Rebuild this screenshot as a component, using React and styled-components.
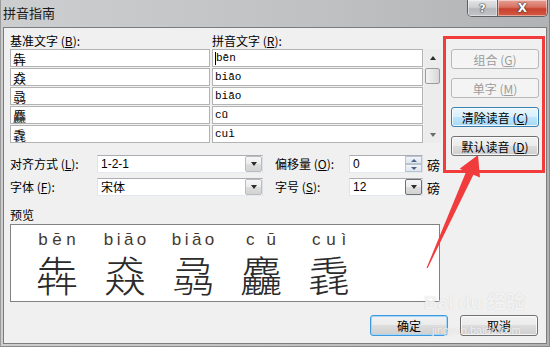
import React from 'react';
import styled, { createGlobalStyle, css } from 'styled-components';

const Global = createGlobalStyle`
  html, body { margin: 0; padding: 0; background: #fff; }
  body {
    font-family: "Noto Sans CJK SC", "Liberation Sans", sans-serif;
    font-size: 12px;
    color: #000;
  }
`;

const CJK = '"Noto Sans CJK SC", "Liberation Sans", sans-serif';

const Win = styled.div`
  position: relative;
  width: 550px;
  height: 347px;
  box-sizing: border-box;
  display: flex;
  flex-direction: column;
  overflow: hidden;
  background: linear-gradient(to right, #cdcecf 0%, #bfc0c2 60%, #b1b2b4 100%);
  box-shadow: inset 1px 0 0 #9a9a9a, inset -1px 0 0 #8a8a8a, inset 0 -1px 0 #8a8a8a;
`;

const TitleBar = styled.div`
  height: 27px;
  flex: none;
  display: flex;
  align-items: flex-start;
  justify-content: space-between;
`;

const Title = styled.div`
  padding: 4px 0 0 3px;
  font-size: 13px;
  line-height: 17px;
  color: #1c1c1c;
`;

const CaptionGroup = styled.div`
  display: flex;
  margin-right: 2px;
  border: 1px solid #5f6063;
  border-top: none;
  border-radius: 0 0 5px 5px;
  overflow: hidden;
  height: 16px;
`;

const CapBtn = styled.div`
  width: ${p => p.$w}px;
  height: 100%;
  display: flex;
  align-items: center;
  justify-content: center;
  font-family: "DejaVu Sans", sans-serif;
  font-weight: bold;
  font-size: ${p => (p.$close ? 12 : 11)}px;
  color: #fff;
  text-shadow: 0 0 1px #333, 0 0 1px #333, 0 0 2px #444;
  box-shadow: inset 0 0 0 1px rgba(255, 255, 255, 0.45);
  ${p =>
    p.$close
      ? css`
          background: linear-gradient(#e5a195 0%, #d8705f 45%, #c7402f 55%, #d45a42 100%);
        `
      : css`
          border-right: 1px solid #5f6063;
          background: linear-gradient(#e4e5e7 0%, #cfd0d2 45%, #b7b8bb 55%, #c3c4c6 100%);
        `}
`;

const Client = styled.div`
  flex: 1;
  margin: 0 3px 3px 3px;
  border: 1px solid #7c7c7c;
  background: #f0f0f0;
  display: flex;
  flex-direction: column;
  padding: 6px 0 0 6px;
`;

const Top = styled.div`
  display: flex;
  align-items: flex-start;
`;

const LeftPanel = styled.div`
  width: 431px;
  display: flex;
  flex-direction: column;
`;

const HeaderRow = styled.div`
  height: 15px;
  display: flex;
`;

const Label = styled.span`
  display: inline-block;
  width: ${p => (p.$w ? `${p.$w}px` : 'auto')};
  margin-left: ${p => p.$ml || 0}px;
  font-size: 12px;
  line-height: 14px;
  white-space: nowrap;
  color: #000;
`;

const U = styled.span`
  text-decoration: underline;
  text-underline-offset: 1px;
`;

const GridArea = styled.div`
  display: flex;
`;

const Grid = styled.div`
  display: grid;
  grid-template-columns: 200px 211px;
  column-gap: 2px;
  row-gap: 1px;
`;

const Cell = styled.div`
  box-sizing: border-box;
  height: 18px;
  border: 1px solid #b3b3b3;
  background: #fff;
  display: flex;
  align-items: center;
  padding-left: 2px;
  white-space: nowrap;
  ${p =>
    p.$py
      ? css`
          font-family: "Liberation Mono", monospace;
          font-size: 11px;
        `
      : css`
          font-family: ${CJK};
          font-size: 13px;
        `}
`;

const Caret = styled.span`
  display: inline-block;
  width: 1px;
  height: 13px;
  background: #000;
`;

const ScrollBar = styled.div`
  box-sizing: border-box;
  width: 17px;
  height: 94px;
  margin-left: 1px;
  background: #ececec;
  display: flex;
  flex-direction: column;
  align-items: center;
`;

const ScrollBtn = styled.div`
  width: 17px;
  height: 17px;
  display: flex;
  align-items: center;
  justify-content: center;
  flex: none;
`;

const Arrow = styled.span`
  width: 0;
  height: 0;
  border-left: ${p => p.$s || 3.5}px solid transparent;
  border-right: ${p => p.$s || 3.5}px solid transparent;
  ${p =>
    p.$up
      ? css`border-bottom: ${p.$h || 4}px solid ${p.$c || '#2b2b2b'};`
      : css`border-top: ${p.$h || 4}px solid ${p.$c || '#2b2b2b'};`}
`;

const Thumb = styled.div`
  box-sizing: border-box;
  width: 15px;
  height: 16px;
  margin-top: 2px;
  border: 1px solid #9c9c9c;
  border-radius: 2px;
  background: linear-gradient(to right, #f3f3f3, #e6e6e6 50%, #d6d6d6);
  flex: none;
`;

const Spacer = styled.div`
  flex: 1;
`;

const OptRow = styled.div`
  display: flex;
  align-items: center;
  height: 18px;
  margin-top: ${p => p.$mt}px;
`;

const Field = styled.div`
  box-sizing: border-box;
  width: ${p => p.$w}px;
  height: 18px;
  background: #fff;
  border: 1px solid;
  border-color: #abadb3 #dbdfe6 #e3e9ef #e2e3ea;
  display: flex;
  align-items: stretch;
`;

const FieldText = styled.span`
  flex: 1;
  padding-left: 3px;
  font-size: 12px;
  line-height: 16px;
  font-family: ${p => (p.$latin ? '"Liberation Sans", sans-serif' : CJK)};
`;

const DropBtn = styled.div`
  box-sizing: border-box;
  width: 17px;
  border: 1px solid ${p => (p.$dark ? '#6f6f6f' : '#bcbcbc')};
  border-radius: 2px;
  background: linear-gradient(#f6f6f6 0%, #ececec 49%, #dedede 50%, #d2d2d2 100%);
  display: flex;
  align-items: center;
  justify-content: center;
`;

const SpinCol = styled.div`
  width: 17px;
  display: flex;
  flex-direction: column;
`;

const SpinBtn = styled.div`
  flex: 1;
  box-sizing: border-box;
  border: 1px solid #b8c3d0;
  background: linear-gradient(#f1f4f8, #dfe6ee);
  display: flex;
  align-items: center;
  justify-content: center;
`;

const Unit = styled.span`
  margin-left: 4px;
  font-size: 13px;
`;

const PreviewLabel = styled.div`
  margin-top: 12px;
  height: 16px;
  font-size: 12px;
  line-height: 14px;
`;

const PreviewBox = styled.div`
  box-sizing: border-box;
  width: 430px;
  height: 78px;
  background: #fff;
  border: 1px solid #828282;
  display: flex;
  gap: 24px;
  padding: 5px 0 0 24px;
`;

const Ruby = styled.div`
  width: 44px;
  display: flex;
  flex-direction: column;
  align-items: center;
`;

const PinyinLine = styled.div`
  width: ${p => p.$w}px;
  height: 22px;
  display: flex;
  justify-content: space-around;
  font-family: "Liberation Sans", "DejaVu Sans", sans-serif;
  font-size: 17px;
  line-height: 20px;
  color: #45392f;
`;

const Han = styled.div`
  font-family: ${CJK};
  font-weight: 300;
  font-size: 42px;
  line-height: 44px;
  color: #2b2b2b;
`;

const ButtonCol = styled.div`
  margin-left: 10px;
  padding-top: 15px;
  display: flex;
  flex-direction: column;
  gap: 9px;
`;

const Btn = styled.div`
  box-sizing: border-box;
  width: ${p => p.$w}px;
  height: ${p => p.$h}px;
  border-radius: 3px;
  border: 1px solid #707070;
  background: linear-gradient(#f2f2f2 0%, #ebebeb 49%, #dddddd 50%, #cfcfcf 100%);
  box-shadow: inset 0 0 0 1px rgba(255, 255, 255, 0.75);
  display: flex;
  align-items: center;
  justify-content: center;
  font-size: 12px;
  white-space: nowrap;
  color: #000;
  ${p =>
    p.$disabled &&
    css`
      border-color: #b5b9bc;
      background: #f4f4f4;
      color: #9c9c9c;
      box-shadow: none;
    `}
  ${p =>
    p.$hot &&
    css`
      border-color: #3c7fb1;
      background: linear-gradient(#eaf6fd 0%, #d9f0fc 49%, #bee6fd 50%, #a7d9f5 100%);
    `}
  ${p =>
    p.$default &&
    css`
      border-color: #3d9ae0;
      box-shadow: inset 0 0 0 1px #a6d6f5;
    `}
`;

const BottomRow = styled.div`
  margin-top: 13px;
  padding-right: 8px;
  display: flex;
  justify-content: flex-end;
  gap: 12px;
`;

const Highlight = styled.div`
  position: absolute;
  left: 443px;
  top: 36px;
  width: 102px;
  height: 137px;
  box-sizing: border-box;
  border: 3px solid #f23b3b;
  pointer-events: none;
`;

const Overlay = styled.svg`
  position: absolute;
  left: 0;
  top: 0;
  pointer-events: none;
`;

const Watermark = styled.div`
  position: absolute;
  left: 424px;
  top: 291px;
  display: flex;
  flex-direction: column;
  align-items: flex-start;
  color: rgba(255, 255, 255, 0.75);
  text-shadow: 0 0 1px rgba(150, 150, 150, 0.45);
  pointer-events: none;
`;

const WmBig = styled.span`
  font-family: "Liberation Sans", ${CJK};
  font-size: 19px;
  font-weight: bold;
  line-height: 24px;
`;

const WmSmall = styled.span`
  font-family: "Liberation Sans", sans-serif;
  font-size: 11px;
  line-height: 14px;
  margin-left: 8px;
  margin-top: 8px;
`;

const rows = [
  ['犇', 'bēn'],
  ['猋', 'biāo'],
  ['骉', 'biāo'],
  ['麤', 'cū'],
  ['毳', 'cuì'],
];

const previews = [
  { han: '犇', py: ['b', 'ē', 'n'], w: 42 },
  { han: '猋', py: ['b', 'i', 'ā', 'o'], w: 46 },
  { han: '骉', py: ['b', 'i', 'ā', 'o'], w: 46 },
  { han: '麤', py: ['c', 'ū'], w: 42 },
  { han: '毳', py: ['c', 'u', 'ì'], w: 40 },
];

const Acc = ({ k }) => (
  <>
    {' ('}
    <U>{k}</U>
    {')'}
  </>
);

export default function App() {
  return (
    <>
      <Global />
      <Win>
        <TitleBar>
          <Title>拼音指南</Title>
          <CaptionGroup>
            <CapBtn $w={29}>?</CapBtn>
            <CapBtn $w={49} $close>
              X
            </CapBtn>
          </CaptionGroup>
        </TitleBar>
        <Client>
          <Top>
            <LeftPanel>
              <HeaderRow>
                <Label $w={202}>
                  基准文字<Acc k="B" />:
                </Label>
                <Label>
                  拼音文字<Acc k="R" />:
                </Label>
              </HeaderRow>
              <GridArea>
                <Grid>
                  {rows.map(([h, p], i) => (
                    <React.Fragment key={i}>
                      <Cell>{h}</Cell>
                      <Cell $py>
                        {i === 0 && <Caret />}
                        {p}
                      </Cell>
                    </React.Fragment>
                  ))}
                </Grid>
                <ScrollBar>
                  <ScrollBtn>
                    <Arrow $up />
                  </ScrollBtn>
                  <Thumb />
                  <Spacer />
                  <ScrollBtn>
                    <Arrow $c="#6a6a6a" />
                  </ScrollBtn>
                </ScrollBar>
              </GridArea>
              <OptRow $mt={12}>
                <Label $w={87}>
                  对齐方式<Acc k="L" />:
                </Label>
                <Field $w={166}>
                  <FieldText $latin>1-2-1</FieldText>
                  <DropBtn>
                    <Arrow />
                  </DropBtn>
                </Field>
                <Label $w={74} $ml={12}>
                  偏移量<Acc k="O" />:
                </Label>
                <Field $w={74}>
                  <FieldText $latin>0</FieldText>
                  <SpinCol>
                    <SpinBtn>
                      <Arrow $up $s={3} $h={3} $c="#4d6185" />
                    </SpinBtn>
                    <SpinBtn>
                      <Arrow $s={3} $h={3} $c="#4d6185" />
                    </SpinBtn>
                  </SpinCol>
                </Field>
                <Unit>磅</Unit>
              </OptRow>
              <OptRow $mt={5}>
                <Label $w={87}>
                  字体<Acc k="F" />:
                </Label>
                <Field $w={166}>
                  <FieldText>宋体</FieldText>
                  <DropBtn>
                    <Arrow />
                  </DropBtn>
                </Field>
                <Label $w={74} $ml={12}>
                  字号<Acc k="S" />:
                </Label>
                <Field $w={74}>
                  <FieldText $latin>12</FieldText>
                  <DropBtn $dark>
                    <Arrow />
                  </DropBtn>
                </Field>
                <Unit>磅</Unit>
              </OptRow>
              <PreviewLabel>预览</PreviewLabel>
              <PreviewBox>
                {previews.map((p, i) => (
                  <Ruby key={i}>
                    <PinyinLine $w={p.w}>
                      {p.py.map((l, j) => (
                        <span key={j}>{l}</span>
                      ))}
                    </PinyinLine>
                    <Han>{p.han}</Han>
                  </Ruby>
                ))}
              </PreviewBox>
            </LeftPanel>
            <ButtonCol>
              <Btn $w={88} $h={20} $disabled>
                组合<Acc k="G" />
              </Btn>
              <Btn $w={88} $h={20} $disabled>
                单字<Acc k="M" />
              </Btn>
              <Btn $w={88} $h={20} $hot>
                清除读音<Acc k="C" />
              </Btn>
              <Btn $w={88} $h={20}>
                默认读音<Acc k="D" />
              </Btn>
            </ButtonCol>
          </Top>
          <BottomRow>
            <Btn $w={78} $h={21} $default>
              确定
            </Btn>
            <Btn $w={78} $h={21}>
              取消
            </Btn>
          </BottomRow>
        </Client>
        <Watermark>
          <WmBig>Bai du 经验</WmBig>
          <WmSmall>jingyan.baidu.com</WmSmall>
        </Watermark>
        <Highlight />
        <Overlay width="550" height="347" viewBox="0 0 550 347">
          <polygon
            points="478,155 480,177.5 473.4,174.8 427.6,268.2 426.6,267.8 466.2,171.6 459.6,168.7"
            fill="#f03c3c"
          />
        </Overlay>
      </Win>
    </>
  );
}
